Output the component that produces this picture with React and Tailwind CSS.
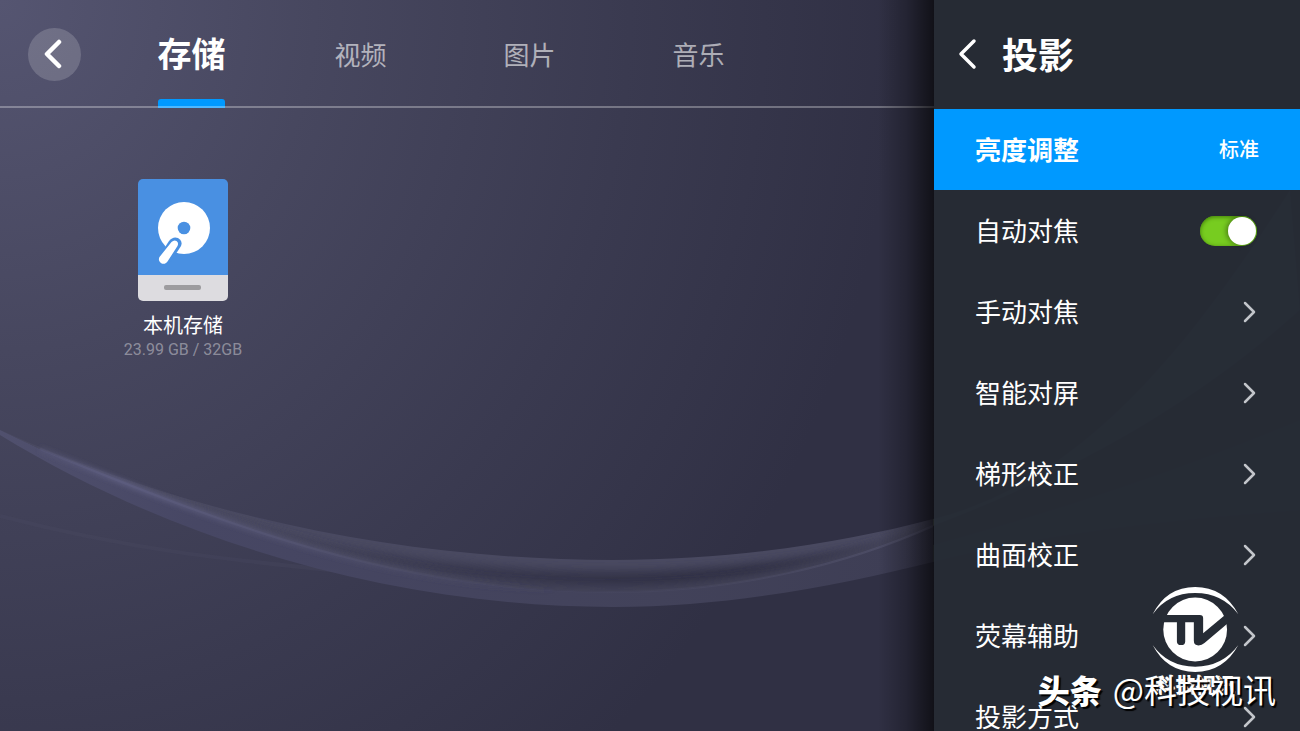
import { useState } from 'react';
import clsx from 'clsx';

const tabs = ['存储', '视频', '图片', '音乐'];

const settings = [
  { label: '亮度调整', value: '标准' },
  { label: '自动对焦', toggle: true },
  { label: '手动对焦' },
  { label: '智能对屏' },
  { label: '梯形校正' },
  { label: '曲面校正' },
  { label: '荧幕辅助' },
  { label: '投影方式' },
];

const UPPER = 'M0 430 C190 515 400 560 613 560 C740 560 850 541 933 519';
const MIDDLE = 'M40 449 C230 527 400 592 610 592 C740 592 850 563 933 526';

function Waves() {
  return (
    <svg className="absolute inset-0 w-full h-full" viewBox="0 0 1300 731" preserveAspectRatio="none" fill="none" aria-hidden="true">
      <defs>
        <linearGradient id="ribbon" x1="0" y1="0" x2="933" y2="0" gradientUnits="userSpaceOnUse">
          <stop offset="0" stopColor="#535372" stopOpacity="0.8" />
          <stop offset="0.2" stopColor="#484866" stopOpacity="0.9" />
          <stop offset="0.7" stopColor="#43435b" stopOpacity="0.95" />
          <stop offset="1" stopColor="#3e3e55" stopOpacity="0.95" />
        </linearGradient>
        <linearGradient id="crest" x1="0" y1="0" x2="933" y2="0" gradientUnits="userSpaceOnUse">
          <stop offset="0" stopColor="#5c5c7e" stopOpacity="0" />
          <stop offset="0.13" stopColor="#5c5c7e" stopOpacity="0.9" />
          <stop offset="0.35" stopColor="#53536f" stopOpacity="0.7" />
          <stop offset="0.6" stopColor="#4a4a62" stopOpacity="0.2" />
          <stop offset="1" stopColor="#55556f" stopOpacity="0.7" />
        </linearGradient>
        <linearGradient id="halo" x1="0" y1="0" x2="933" y2="0" gradientUnits="userSpaceOnUse">
          <stop offset="0" stopColor="#5c5c7e" stopOpacity="0" />
          <stop offset="0.13" stopColor="#5c5c7e" stopOpacity="0.9" />
          <stop offset="0.4" stopColor="#53536f" stopOpacity="0.4" />
          <stop offset="0.6" stopColor="#4a4a62" stopOpacity="0" />
        </linearGradient>
        <filter id="soft" x="-10%" y="-50%" width="120%" height="200%">
          <feGaussianBlur stdDeviation="5" />
        </filter>
        <filter id="glow" x="-10%" y="-50%" width="120%" height="200%">
          <feGaussianBlur stdDeviation="2" />
        </filter>
        <clipPath id="band">
          <path d={`${UPPER} L933 526 C850 563 740 592 610 592 C400 592 230 527 40 449 Z`} />
        </clipPath>
      </defs>
      <path d="M0 516 C130 550 230 560 340 571" stroke="#4a4a64" strokeOpacity="0.25" strokeWidth="4" />
      {/* lower ribbon, then the darker band with its lit upper edge */}
      <path
        d="M0 430 L40 449 C230 527 400 592 610 592 C740 592 850 563 933 526 L933 562 C840 585 730 607 613 607 C400 607 180 545 0 435 Z"
        fill="url(#ribbon)"
      />
      <g clipPath="url(#band)">
        <path d={UPPER} stroke="#484860" strokeWidth="22" filter="url(#soft)" />
        <path d={MIDDLE} stroke="#48485f" strokeWidth="8" filter="url(#soft)" />
      </g>
      <path d={MIDDLE} stroke="url(#halo)" strokeWidth="6" filter="url(#glow)" />
      <path d={MIDDLE} stroke="url(#crest)" strokeWidth="2" />
      {/* tail that runs on behind the settings panel */}
      <path d="M933 519 C1090 480 1200 330 1290 190 L1300 310 C1200 400 1080 470 933 526 Z" fill="#8fa890" fillOpacity="0.4" />
      <path d="M933 562 C1060 530 1180 520 1300 510 L1300 420 C1180 470 1060 510 933 545 Z" fill="#8fa890" fillOpacity="0.2" />
    </svg>
  );
}

function DiskIcon() {
  return (
    <svg width="90" height="122" viewBox="0 0 90 122" aria-hidden="true">
      <path d="M0 96V5a5 5 0 0 1 5-5h80a5 5 0 0 1 5 5v91z" fill="#4990e2" />
      <path d="M0 96h90v21a5 5 0 0 1-5 5H5a5 5 0 0 1-5-5z" fill="#dddce0" />
      <circle cx="46" cy="49" r="26" fill="#fff" />
      <circle cx="46" cy="49" r="6.300" fill="#4990e2" />
      <path d="M22 76L31 62Q35 57 40 59Q45 62 43 67L32 84Z" fill="#4990e2" />
      <path d="M21.500 78L33.500 63Q36 60.500 38.500 62Q41 63.500 39.500 67L29.500 82.500A4.200 4.200 0 0 1 21.500 78Z" fill="#fff" />
      <rect x="26" y="106" width="37" height="5" rx="2" fill="#9d9c9f" />
    </svg>
  );
}

function ChevronRight() {
  return (
    <svg width="14" height="24" viewBox="0 0 14 24" fill="none" stroke="#c3c6cb" strokeWidth="2.500" strokeLinecap="round" strokeLinejoin="round" aria-hidden="true">
      <path d="M2 3L11 12L2 21" />
    </svg>
  );
}

function ChannelLogo() {
  return (
    <svg width="87" height="87" viewBox="392 48 262 260" aria-hidden="true">
      <path d="M394 132Q436 50 522 50Q608 50 652 132Q604 68 522 68Q440 68 394 132Z" fill="#fff" />
      <path d="M394 225Q440 290 522 290Q604 290 652 225Q608 306 522 306Q436 306 394 225Z" fill="#fff" />
      <circle cx="522" cy="178" r="96" fill="#fff" />
      <path
        d="M420 134H536Q546 134 546 144V189L612 134L624 156L550 219Q542 226 532 226Q518 226 518 212V156H492V214Q492 225 480 225Q467 225 467 214V156H420Z"
        fill="#262c35"
      />
    </svg>
  );
}

function SettingRow({ item, active, on, onToggle, onSelect }) {
  if (item.toggle) {
    return (
      <label className="flex items-center justify-between h-[81px] pl-[41px] pr-[43px] text-[26px] cursor-pointer">
        <span className="pb-0.5">{item.label}</span>
        <input
          type="checkbox"
          role="switch"
          checked={on}
          onChange={onToggle}
          className="appearance-none flex items-center w-[57px] h-[30px] px-px rounded-full bg-gray-600 checked:bg-[#77cc20] checked:justify-end inset-shadow-[0_1px_4px_#3f7a08] before:block before:size-7 before:rounded-full before:bg-white before:shadow-[-2px_0_5px_rgba(0,0,0,0.35)]"
        />
      </label>
    );
  }
  return (
    <button
      type="button"
      onClick={onSelect}
      className={clsx('flex items-center justify-between w-full h-[81px] pl-[41px] text-[26px]', active && 'bg-[#0099ff] font-bold', item.value ? 'pr-[41px]' : 'pr-[43px]')}
    >
      <span className="pb-0.5">{item.label}</span>
      {item.value ? <span className="pb-0.5 text-xl font-medium">{item.value}</span> : <ChevronRight />}
    </button>
  );
}

export default function App() {
  const [tab, setTab] = useState('存储');
  const [selected, setSelected] = useState('亮度调整');
  const [autoFocus, setAutoFocus] = useState(true);

  return (
    <div className="relative flex h-screen overflow-hidden text-white font-['Noto_Sans_CJK_SC',sans-serif] bg-[radial-gradient(ellipse_900px_1000px_at_0_0,#555571_0%,#47475f_35%,#3a3a50_70%,#303044_100%)]">
      <Waves />

      <main className="relative flex-1 min-w-0">
        <header className="relative flex items-center h-[108px]">
          <button type="button" aria-label="返回" className="flex items-center justify-center ml-7 mr-[26px] size-[53px] rounded-full bg-white/17">
            <svg width="22" height="32" viewBox="0 0 22 32" fill="none" stroke="#fff" strokeWidth="4.500" strokeLinecap="round" strokeLinejoin="round" aria-hidden="true">
              <path d="M15 4L3 16L15 28" />
            </svg>
          </button>
          <nav className="flex h-full">
            {tabs.map((name) => (
              <button
                key={name}
                type="button"
                onClick={() => setTab(name)}
                className={clsx('relative w-[169px] h-full', name === tab ? 'pb-1 text-[34px] font-bold' : 'pb-0.5 text-[26px] text-white/60')}
              >
                {name}
                {name === tab && <span className="absolute bottom-0 inset-x-[51px] h-[9px] rounded-t-[3px] bg-[#0099ff]" />}
              </button>
            ))}
          </nav>
          <div className="absolute bottom-0 inset-x-0 h-0.5 bg-white/30" />
        </header>

        <button type="button" className="flex flex-col items-center w-[126px] ml-[120px] mt-[71px]">
          <DiskIcon />
          <span className="mt-2.5 text-xl leading-7">本机存储</span>
          <span className="font-['Roboto',sans-serif] text-base leading-[22px] text-white/40 whitespace-nowrap">23.99 GB / 32GB</span>
        </button>

        {/* shadow cast by the panel */}
        <div className="absolute inset-y-0 right-0 w-14 bg-linear-to-r from-transparent via-black/25 to-black/65 pointer-events-none" />
      </main>

      <aside className="relative w-[366px] shrink-0 overflow-hidden bg-[#252b34]/96">
        <header className="flex items-center h-[109px] pl-6">
          <button type="button" aria-label="返回">
            <svg width="20" height="34" viewBox="0 0 20 34" fill="none" stroke="#fff" strokeWidth="3.500" strokeLinecap="round" strokeLinejoin="round" aria-hidden="true">
              <path d="M16 3L3 16L16 29" />
            </svg>
          </button>
          <h1 className="ml-6 pb-1 text-4xl font-bold">投影</h1>
        </header>
        {settings.map((item) => (
          <SettingRow
            key={item.label}
            item={item}
            active={item.label === selected}
            on={autoFocus}
            onToggle={() => setAutoFocus(!autoFocus)}
            onSelect={() => setSelected(item.label)}
          />
        ))}
      </aside>

      {/* channel mark */}
      <div className="absolute right-6 bottom-[22px] flex flex-col items-end pointer-events-none">
        <div className="flex flex-col items-center mr-[37px]">
          <ChannelLogo />
          <span className="-mb-7 text-xl leading-6 font-black">科技视讯</span>
        </div>
        <p className="flex items-center gap-[11px] text-[33px] leading-10 text-shadow-[2px_2px_1px_#000]">
          <span className="text-[32px] font-black">头条</span>
          <span>@科技视讯</span>
        </p>
      </div>
    </div>
  );
}
